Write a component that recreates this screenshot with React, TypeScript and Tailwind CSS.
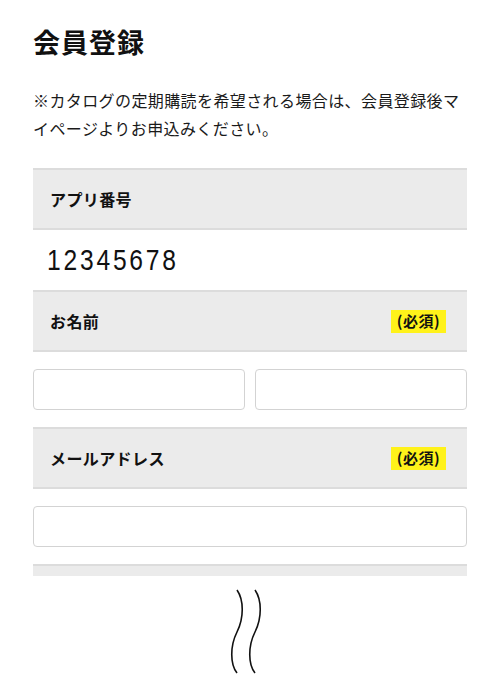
import React from "react";

const jp = { fontFamily: '"Noto Sans CJK JP", "Noto Sans", sans-serif' };

function Header({ label, required }: { label: string; required?: boolean }) {
  return (
    <div className="flex h-[62px] items-center justify-between border-y-2 border-[#dcdcdc] bg-[#ebebeb] pl-[17px] pr-[21px]">
      <span className="text-[16px] font-bold tracking-[0.4px] text-[#111]">{label}</span>
      {required && (
        <span className="flex h-[23px] w-[55px] items-center justify-center bg-[#fff21a] text-[15px] font-bold tracking-[0.5px] text-[#111]">
          (必須)
        </span>
      )}
    </div>
  );
}

function Field({ className = "" }: { className?: string }) {
  return (
    <div className={`h-[41px] rounded-[4px] border-[1.5px] border-[#d3d3d3] bg-white ${className}`} />
  );
}

export default function App() {
  return (
    <div className="min-h-[688px] w-[500px] bg-white px-[33px] text-[#111]" style={jp}>
      <h1 className="pt-[22px] text-[27px] font-bold leading-[40px] tracking-[1px]">会員登録</h1>
      <p className="mt-[24px] text-[16px] leading-[28px] tracking-[0.4px] text-[#1a1a1a]">
        ※カタログの定期購読を希望される場合は、会員登録後マイページよりお申込みください。
      </p>
      <div className="mt-[26px]">
        <Header label="アプリ番号" />
        <div className="flex h-[60px] items-center pl-[14px]">
          <span
            className="origin-left scale-x-[0.82] text-[30px] leading-none tracking-[3.4px]"
            style={{ fontFamily: '"Liberation Sans", Arial, sans-serif' }}
          >
            12345678
          </span>
        </div>
        <Header label="お名前" required />
        <div className="grid grid-cols-2 gap-[10px] py-[17px]">
          <Field />
          <Field />
        </div>
        <Header label="メールアドレス" required />
        <div className="py-[17px]">
          <Field />
        </div>
        <div className="h-[12px] border-t-2 border-[#dcdcdc] bg-[#ebebeb]" />
      </div>
      <div className="-mx-[33px] mt-[9px]">
        <svg width="500" height="92" viewBox="0 583 500 92" fill="none">
          <path d="M237 588 C244 598, 244 616, 237 630 C230 644, 230 662, 237 671" stroke="#111" strokeWidth="1.6" />
          <path d="M255 588 C262 598, 262 616, 255 630 C248 644, 248 662, 255 671" stroke="#111" strokeWidth="1.6" />
        </svg>
      </div>
    </div>
  );
}
